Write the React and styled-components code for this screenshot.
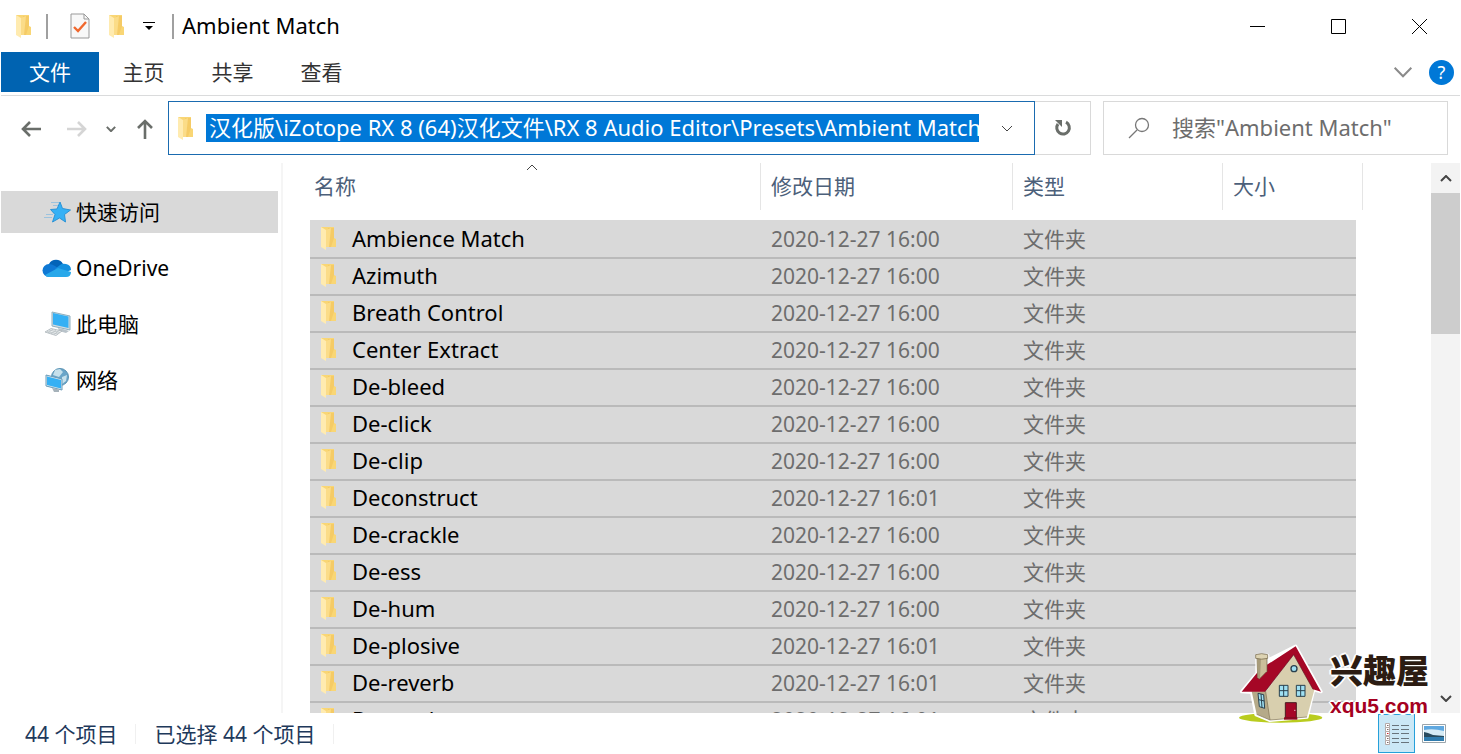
import React, { useState } from 'react';
import styled, { createGlobalStyle } from 'styled-components';

const GlobalStyle = createGlobalStyle`
  * {
    box-sizing: border-box;
  }
  body {
    margin: 0;
    background: #fff;
    color: #000;
    font-family: 'Noto Sans', 'Noto Sans CJK SC', sans-serif;
    font-size: 21px;
    line-height: 28px;
  }
  button, input {
    font: inherit;
    color: inherit;
    margin: 0;
    padding: 0;
    border: 0;
    border-radius: 0;
    background: none;
  }
  svg {
    display: block;
    flex: none;
  }
`;

const Window = styled.div`
  position: relative;
  display: flex;
  flex-direction: column;
  height: 100vh;
  padding: 0 1px;
  overflow: hidden;
`;

const TitleBar = styled.header`
  display: flex;
  align-items: center;
  height: 52px;
  flex: none;
`;

const QuickTools = styled.div`
  display: flex;
  align-items: center;
  padding-left: 14px;
`;

const ToolButton = styled.button`
  display: flex;
  align-items: center;
  justify-content: center;
  flex: none;
  width: ${(props) => props.$width || 20}px;
  height: 28px;
`;

const Divider = styled.span`
  width: 2px;
  height: 25px;
  margin: 0 ${(props) => props.$after || 0}px 0 ${(props) => props.$before || 0}px;
  background: #a0a0a0;
`;

const Title = styled.h1`
  flex: 1;
  margin: 0;
  padding: 0 0 2px 8px;
  font-size: 22px;
  font-weight: 400;
`;

const CaptionButton = styled.button`
  display: flex;
  align-items: center;
  justify-content: center;
  width: 81px;
  height: 52px;
`;

const Ribbon = styled.nav`
  display: flex;
  align-items: center;
  height: 44px;
  flex: none;
  padding-bottom: 3px;
  border-bottom: 1px solid #dadbdc;
`;

const RibbonTab = styled.button`
  width: ${(props) => (props.$active ? 98 : 89)}px;
  height: 40px;
  background: ${(props) => (props.$active ? '#0063b1' : 'transparent')};
  color: ${(props) => (props.$active ? '#fff' : '#333')};
`;

const RibbonTools = styled.div`
  display: flex;
  align-items: center;
  gap: 16px;
  margin-left: auto;
  padding-right: 6px;
`;

const HelpButton = styled.button`
  width: 25px;
  height: 25px;
  border-radius: 50%;
  background: #0078d7;
  color: #fff;
  font-size: 18px;
  line-height: 24px;
`;

const NavBar = styled.div`
  display: flex;
  align-items: center;
  height: 64px;
  flex: none;
  padding: 0 12px 0 14px;
`;

const NavButtons = styled.div`
  display: flex;
  align-items: center;
  width: 153px;
  flex: none;
  padding: 2px 13px 0 0;

  > :last-child {
    margin-left: auto;
  }
`;

const AddressBar = styled.div`
  display: flex;
  align-items: center;
  flex: 1;
  min-width: 0;
  height: 54px;
  padding-left: 8px;
  border: 1px solid #1a6bb0;
`;

const PathInput = styled.input`
  flex: none;
  width: 773px;
  height: 28px;
  margin-left: 12px;
  padding: 0 0 2px 3px;
  background: #0078d7;
  color: #fff;
  font-size: 22px;
  outline: none;
`;

const AddressButton = styled.button`
  display: flex;
  align-items: center;
  justify-content: center;
  flex: 1;
  height: 52px;
`;

const RefreshButton = styled.button`
  display: flex;
  align-items: center;
  justify-content: center;
  width: 56px;
  height: 54px;
  border: 1px solid #d9d9d9;
  border-left: 0;
`;

const SearchBox = styled.label`
  display: flex;
  align-items: center;
  width: 345px;
  height: 54px;
  margin-left: 12px;
  padding-left: 24px;
  border: 1px solid #d9d9d9;
`;

const SearchInput = styled.input`
  flex: 1;
  min-width: 0;
  margin-left: 22px;
  padding-bottom: 2px;
  font-size: 22px;
  outline: none;

  &::placeholder {
    color: #6d6d6d;
    opacity: 1;
  }
`;

const Content = styled.div`
  display: flex;
  flex: 1;
  min-height: 0;
  padding-top: 3px;
`;

const Sidebar = styled.aside`
  display: flex;
  flex-direction: column;
  gap: 14px;
  width: 282px;
  flex: none;
  padding: 28px 3px 0 0;
  border-right: 2px solid #f5f5f5;
`;

const SidebarItem = styled.a`
  display: flex;
  align-items: center;
  gap: 4px;
  height: 42px;
  padding-left: 41px;
  background: ${(props) => (props.$selected ? '#d9d9d9' : 'transparent')};
  color: #000;
  text-decoration: none;
`;

const FileArea = styled.main`
  flex: 1;
  min-width: 0;
  padding-left: 27px;
  overflow: hidden;
`;

const FileTable = styled.table`
  width: 1053px;
  table-layout: fixed;
  border-collapse: separate;
  border-spacing: 0;
`;

const HeadCell = styled.th`
  width: ${(props) => props.$width}px;
  height: 57px;
  padding: 0 0 10px;
  font-weight: 400;
`;

const HeadButton = styled.button`
  position: relative;
  display: block;
  width: 100%;
  height: 47px;
  padding: 0 0 2px ${(props) => (props.$sorted ? 4 : 10)}px;
  border-right: 1px solid #e5e5e5;
  color: #4c607a;
  text-align: left;
`;

const SortMark = styled.span`
  position: absolute;
  top: 1px;
  left: 216px;
`;

const Cell = styled.td`
  height: 37px;
  padding: 0 0 0 10px;
  background: #d9d9d9;
  background-clip: padding-box;
  color: #6d6d6d;
  white-space: nowrap;

  &:last-child {
    border-right: 7px solid transparent;
  }
  tr + tr > & {
    box-shadow: inset 0 2px #bababa;
  }
`;

const FileName = styled.div`
  display: flex;
  align-items: center;
  gap: 15px;
  padding-bottom: 2px;
  color: #000;
  font-size: 22px;
`;

const ScrollBar = styled.div`
  display: flex;
  flex-direction: column;
  width: 29px;
  flex: none;
  background: #f3f3f3;
`;

const ScrollButton = styled.button`
  display: flex;
  align-items: center;
  justify-content: center;
  height: 30px;
  margin-top: ${(props) => (props.$end ? 'auto' : 0)};
`;

const ScrollThumb = styled.div`
  height: 141px;
  background: #cdcdcd;
`;

const StatusBar = styled.footer`
  display: flex;
  align-items: center;
  height: 41px;
  flex: none;
  padding: 0 14px 0 24px;
  color: #1e395b;
`;

const StatusText = styled.span`
  margin-right: 18px;
  padding-right: 18px;
  border-right: 1px solid #f0f0f0;
  line-height: 20px;
`;

const ViewButtons = styled.div`
  display: flex;
  align-items: center;
  gap: 7px;
  margin-left: auto;
`;

const ViewButton = styled.button`
  display: flex;
  align-items: center;
  justify-content: center;
  width: ${(props) => (props.$active ? 37 : 24)}px;
  height: 39px;
  border: ${(props) => (props.$active ? '1px solid #26a0da' : 0)};
  background: ${(props) => (props.$active ? '#cbe8f6' : 'transparent')};
`;

const Watermark = styled.div`
  position: absolute;
  right: 32px;
  bottom: 28px;
  display: flex;
  align-items: flex-end;
  gap: 5px;
`;

const WatermarkText = styled.div`
  display: flex;
  flex-direction: column;
  gap: 5px;
  padding-bottom: 6px;
  text-shadow: 2px 0 #fff, -2px 0 #fff, 0 2px #fff, 0 -2px #fff, 1px 1px #fff, -1px -1px #fff;
`;

const SiteName = styled.strong`
  color: #2c1c12;
  font-family: 'Noto Sans CJK SC', sans-serif;
  font-size: 33px;
  font-weight: 900;
  line-height: 36px;
`;

const SiteUrl = styled.strong`
  color: #a50021;
  font-family: 'Liberation Sans', sans-serif;
  font-size: 21px;
  font-weight: 700;
  line-height: 28px;
`;

const FolderIcon = () => (
  <svg width="17" height="24" viewBox="0 0 17 24">
    <path d="M1 1h13v11l2 1v8H6z" fill="#f9d675" />
    <path d="M8 2h6v10l-3 9H7z" fill="#f5cb66" />
    <path d="M6 4l5-2-2 19H6z" fill="#fbdc88" />
    <path d="M1 1l5 3v20l-5-3z" fill="#ffebb0" />
  </svg>
);

const ChevronIcon = ({ width = 12, height = 7, color = '#444', stroke = 2, up }) => (
  <svg width={width} height={height} viewBox="0 0 12 7" preserveAspectRatio="none" fill="none" stroke={color} strokeWidth={stroke}>
    <path d={up ? 'M1 6l5-5 5 5' : 'M1 1l5 5 5-5'} vectorEffect="non-scaling-stroke" />
  </svg>
);

const CheckPageIcon = () => (
  <svg width="20" height="26" viewBox="0 0 20 26" fill="none">
    <path d="M1 1h13l5 5v19H1z" fill="#f8f8f8" stroke="#999" />
    <path d="M14 1v5h5" stroke="#999" />
    <path d="M4 14l4 4 8-9" stroke="#f0682e" strokeWidth="2.4" />
  </svg>
);

const CustomizeIcon = () => (
  <svg width="12" height="10" viewBox="0 0 12 10">
    <path d="M0 1h12v1H0zM2 5h8L6 9z" fill="#000" />
  </svg>
);

const ArrowIcon = ({ color, rotate = 0 }) => (
  <svg width="20" height="20" viewBox="0 0 20 20" fill="none" stroke={color} strokeWidth="2.6">
    <path d="M20 10H2M9 3l-7 7 7 7" transform={`rotate(${rotate} 10 10)`} />
  </svg>
);

const RefreshIcon = () => (
  <svg width="18" height="18" viewBox="0 0 18 18" fill="none">
    <path d="M12 3.200A6.300 6.300 0 1 1 4 5" stroke="#6a6e6a" strokeWidth="3" />
    <path d="M1 1h7v7z" fill="#6a6e6a" />
  </svg>
);

const SearchIcon = () => (
  <svg width="22" height="22" viewBox="0 0 22 22" fill="none" stroke="#777" strokeWidth="1.300">
    <circle cx="14" cy="8" r="6.500" />
    <path d="M9 13l-8 8" />
  </svg>
);

const StarIcon = () => (
  <svg width="30" height="24" viewBox="0 0 30 24">
    <path d="M18 2l2.500 6.500 8 1.500-6 4.500 1 7.500-6-4-7 4 2.500-7.500-4.500-5 6.500-.5z" fill="#35b1f5" stroke="#2c93d6" />
    <path d="M9 2.500h8M11 5.500h5M4 14.500h7M2 17.500h8" stroke="#9cc3de" />
  </svg>
);

const CloudIcon = () => (
  <svg width="30" height="20" viewBox="0 0 30 20">
    <path d="M7 6a8 8 0 0 1 14 0l-2 8H6z" fill="#0364b8" />
    <path d="M7 19a6.500 6.500 0 0 1 0-13q3 0 6 2l6 4-12 7z" fill="#0f78d4" />
    <path d="M13 11l5-4q2-2 6-1a6 6 0 0 1 5 6l-9 4z" fill="#1490df" />
    <path d="M3 17l13-7 13 4q0 5-5 5H7q-3 0-4-2z" fill="#28a8ea" />
  </svg>
);

const ComputerIcon = () => (
  <svg width="30" height="26" viewBox="0 0 30 26">
    <path d="M10 1l18 4v14l-18-4z" fill="#d4dce0" stroke="#8fb0c0" />
    <path d="M11 2l15.500 3.500v11.500L11 13.500z" fill="#35b0f4" />
    <path d="M16 17l5 1 6 2-3 2-7-2z" fill="#b9c3ca" />
    <path d="M9 17.500l11 2.500-6 4.500L3 21z" fill="#eceff0" stroke="#aab3b8" strokeWidth=".8" />
    <path d="M7 19l11 2.500M5 20.500l11 2.500M11 18l-5 4M14 19l-5 4M17 19.500l-5 4" stroke="#b3bbc0" strokeWidth=".7" />
  </svg>
);

const NetworkIcon = () => (
  <svg width="30" height="26" viewBox="0 0 30 26">
    <circle cx="18" cy="10" r="8.500" fill="#6aa5c8" stroke="#5b93b4" />
    <path d="M13 3l5-1 3 3-4 5-6-2zM20 10l5-2-1 6-4 3z" fill="#c6e0eb" />
    <path d="M4 8l16 4v11L4 19z" fill="#d7e6ed" stroke="#6a9bb8" />
    <path d="M5 9.500l14 3.500v8.500L5 18z" fill="#35b0f4" />
    <path d="M10 21l7 1.500v2.500h-5z" fill="#a6b2ba" />
  </svg>
);

const DetailsIcon = () => (
  <svg width="26" height="24" viewBox="0 0 26 24" fill="none">
    {[1, 5, 9, 14, 18].map((y) => (
      <g key={y}>
        <path d={`M1.500 ${y + 0.5}h4v4h-4z`} fill="#fff" stroke="#b5aba8" />
        <path d={`M3 ${y + 2.5}h1.500`} stroke={y === 9 ? '#d0202b' : '#7a6a68'} />
        <path d={`M8 ${y + 2.5}h7M17 ${y + 2.5}h8`} stroke="#68747c" />
      </g>
    ))}
  </svg>
);

const PictureIcon = () => (
  <svg width="24" height="19" viewBox="0 0 24 19">
    <path d="M.5.500h23v18H.5z" fill="#fff" stroke="#9ba5ab" />
    <path d="M2 2h20v15H2z" fill="#5fa8e0" />
    <path d="M2 6q9-2 20 1v5H2z" fill="#d6ebf5" />
    <path d="M2 8l4 1 5 2 11 1v1H2z" fill="#284b5e" />
    <path d="M2 13h20v4H2z" fill="#307cae" />
  </svg>
);

const HouseIcon = () => (
  <svg width="87" height="82" viewBox="9 12 261 246">
    <ellipse cx="137" cy="233" rx="125" ry="15" fill="#b9cc1e" />
    <g stroke="#fff" strokeWidth="10" strokeLinejoin="round" fill="#fff">
      <path d="M20 155L66 100V46h32v15l84-42 76 136-22-6-20 82-111 10-42-17-13-67z" />
    </g>
    <path d="M50 154h46l9 86-40-17z" fill="#b5aa89" />
    <path d="M92 155L176 44l62 105-22 82-111 9z" fill="#d8cfae" />
    <path d="M92 155l13 85M216 231l-111 9-40-17" fill="none" stroke="#7d7050" strokeWidth="2" />
    <path d="M20 155L75 88l107-69 76 136-24-7-58-104-86 111z" fill="#a50726" />
    <path d="M176 44L90 155M176 44l58 104" fill="none" stroke="#5d1420" strokeWidth="2" />
    <path d="M66 52h30v42l-23 23-5-4z" fill="#cbbf9a" stroke="#6b5d41" strokeWidth="2" />
    <path d="M66 52h12l-3 63-7-2z" fill="#a79b7a" />
    <path d="M62 44q18-6 36 0v11q-18 5-36 0z" fill="#ddd3b2" stroke="#6b5d41" strokeWidth="2" />
    <circle cx="177" cy="86" r="9" fill="#9fe0f2" stroke="#29404e" strokeWidth="4" />
    <g fill="#9fe0f2" stroke="#29404e" strokeWidth="3">
      <path d="M133 136h26v33h-26zM146 136v33M133 152h26" />
      <path d="M184 136h26v33h-26zM197 136v33M184 152h26" />
      <path d="M69 160l17 4 3 41-16-5zM78 162l3 41M71 179l17 4" />
    </g>
    <path d="M151 188h33v46h-33z" fill="#a50726" stroke="#4b1d22" strokeWidth="3" />
    <path d="M147 232h40v7h-40z" fill="#8d0920" />
    <path d="M178 211h3" stroke="#fff" strokeWidth="3" />
  </svg>
);

const places = [
  { name: '快速访问', Icon: StarIcon },
  { name: 'OneDrive', Icon: CloudIcon },
  { name: '此电脑', Icon: ComputerIcon },
  { name: '网络', Icon: NetworkIcon },
];

const columns = [
  { name: '名称', width: 451 },
  { name: '修改日期', width: 252 },
  { name: '类型', width: 210 },
  { name: '大小', width: 140 },
];

const folders = [
  { name: 'Ambience Match', time: '16:00' },
  { name: 'Azimuth', time: '16:00' },
  { name: 'Breath Control', time: '16:00' },
  { name: 'Center Extract', time: '16:00' },
  { name: 'De-bleed', time: '16:00' },
  { name: 'De-click', time: '16:00' },
  { name: 'De-clip', time: '16:00' },
  { name: 'Deconstruct', time: '16:01' },
  { name: 'De-crackle', time: '16:00' },
  { name: 'De-ess', time: '16:00' },
  { name: 'De-hum', time: '16:00' },
  { name: 'De-plosive', time: '16:01' },
  { name: 'De-reverb', time: '16:01' },
  { name: 'De-rustle', time: '16:01' },
];

const App = () => {
  const [path, setPath] = useState('汉化版\\iZotope RX 8 (64)汉化文件\\RX 8 Audio Editor\\Presets\\Ambient Match');
  const [place, setPlace] = useState('快速访问');

  return (
    <>
      <GlobalStyle />
      <Window>
        <TitleBar>
          <QuickTools>
            <FolderIcon />
            <Divider $before={14} $after={22} />
            <ToolButton aria-label="属性">
              <CheckPageIcon />
            </ToolButton>
            <ToolButton $width={53} aria-label="新建文件夹">
              <FolderIcon />
            </ToolButton>
            <ToolButton $width={12} aria-label="自定义快速访问工具栏">
              <CustomizeIcon />
            </ToolButton>
            <Divider $before={17} />
          </QuickTools>
          <Title>Ambient Match</Title>
          <CaptionButton aria-label="最小化">
            <svg width="15" height="15" stroke="#000">
              <path d="M0 7.500h15" />
            </svg>
          </CaptionButton>
          <CaptionButton aria-label="最大化">
            <svg width="15" height="15" stroke="#000" fill="none">
              <path d="M.5.500h14v14H.5z" />
            </svg>
          </CaptionButton>
          <CaptionButton aria-label="关闭">
            <svg width="15" height="15" stroke="#000">
              <path d="M0 0l15 15M15 0L0 15" />
            </svg>
          </CaptionButton>
        </TitleBar>
        <Ribbon>
          <RibbonTab $active>文件</RibbonTab>
          <RibbonTab>主页</RibbonTab>
          <RibbonTab>共享</RibbonTab>
          <RibbonTab>查看</RibbonTab>
          <RibbonTools>
            <ToolButton aria-label="展开功能区">
              <ChevronIcon width={20} height={12} color="#8a8a8a" />
            </ToolButton>
            <HelpButton aria-label="帮助">?</HelpButton>
          </RibbonTools>
        </Ribbon>
        <NavBar>
          <NavButtons>
            <ToolButton $width={32} aria-label="后退">
              <ArrowIcon color="#6a6e6a" />
            </ToolButton>
            <ToolButton $width={59} aria-label="前进">
              <ArrowIcon color="#d5d5d5" rotate={180} />
            </ToolButton>
            <ToolButton $width={10} aria-label="最近浏览的位置">
              <ChevronIcon width={10} height={6} color="#6a6e6a" />
            </ToolButton>
            <ToolButton aria-label="上移">
              <ArrowIcon color="#6a6e6a" rotate={90} />
            </ToolButton>
          </NavButtons>
          <AddressBar>
            <FolderIcon />
            <PathInput aria-label="地址" value={path} onChange={(e) => setPath(e.target.value)} />
            <AddressButton aria-label="以前的位置">
              <ChevronIcon stroke={1} />
            </AddressButton>
          </AddressBar>
          <RefreshButton aria-label="刷新">
            <RefreshIcon />
          </RefreshButton>
          <SearchBox>
            <SearchIcon />
            <SearchInput aria-label="搜索" placeholder={'搜索"Ambient Match"'} />
          </SearchBox>
        </NavBar>
        <Content>
          <Sidebar>
            {places.map(({ name, Icon }) => (
              <SidebarItem key={name} href="#" $selected={name === place} onClick={() => setPlace(name)}>
                <Icon />
                {name}
              </SidebarItem>
            ))}
          </Sidebar>
          <FileArea>
            <FileTable>
              <thead>
                <tr>
                  {columns.map(({ name, width }, i) => (
                    <HeadCell key={name} $width={width}>
                      <HeadButton $sorted={i === 0}>
                        {i === 0 && (
                          <SortMark>
                            <ChevronIcon up stroke={1} />
                          </SortMark>
                        )}
                        {name}
                      </HeadButton>
                    </HeadCell>
                  ))}
                </tr>
              </thead>
              <tbody>
                {folders.map(({ name, time }) => (
                  <tr key={name}>
                    <Cell>
                      <FileName>
                        <FolderIcon />
                        {name}
                      </FileName>
                    </Cell>
                    <Cell>2020-12-27 {time}</Cell>
                    <Cell>文件夹</Cell>
                    <Cell />
                  </tr>
                ))}
              </tbody>
            </FileTable>
          </FileArea>
          <ScrollBar>
            <ScrollButton aria-label="向上滚动">
              <ChevronIcon up />
            </ScrollButton>
            <ScrollThumb />
            <ScrollButton $end aria-label="向下滚动">
              <ChevronIcon />
            </ScrollButton>
          </ScrollBar>
        </Content>
        <StatusBar>
          <StatusText>44 个项目</StatusText>
          <StatusText>已选择 44 个项目</StatusText>
          <ViewButtons>
            <ViewButton $active aria-label="详细信息">
              <DetailsIcon />
            </ViewButton>
            <ViewButton aria-label="大缩略图">
              <PictureIcon />
            </ViewButton>
          </ViewButtons>
        </StatusBar>
        <Watermark>
          <HouseIcon />
          <WatermarkText>
            <SiteName>兴趣屋</SiteName>
            <SiteUrl>xqu5.com</SiteUrl>
          </WatermarkText>
        </Watermark>
      </Window>
    </>
  );
};

export default App;
